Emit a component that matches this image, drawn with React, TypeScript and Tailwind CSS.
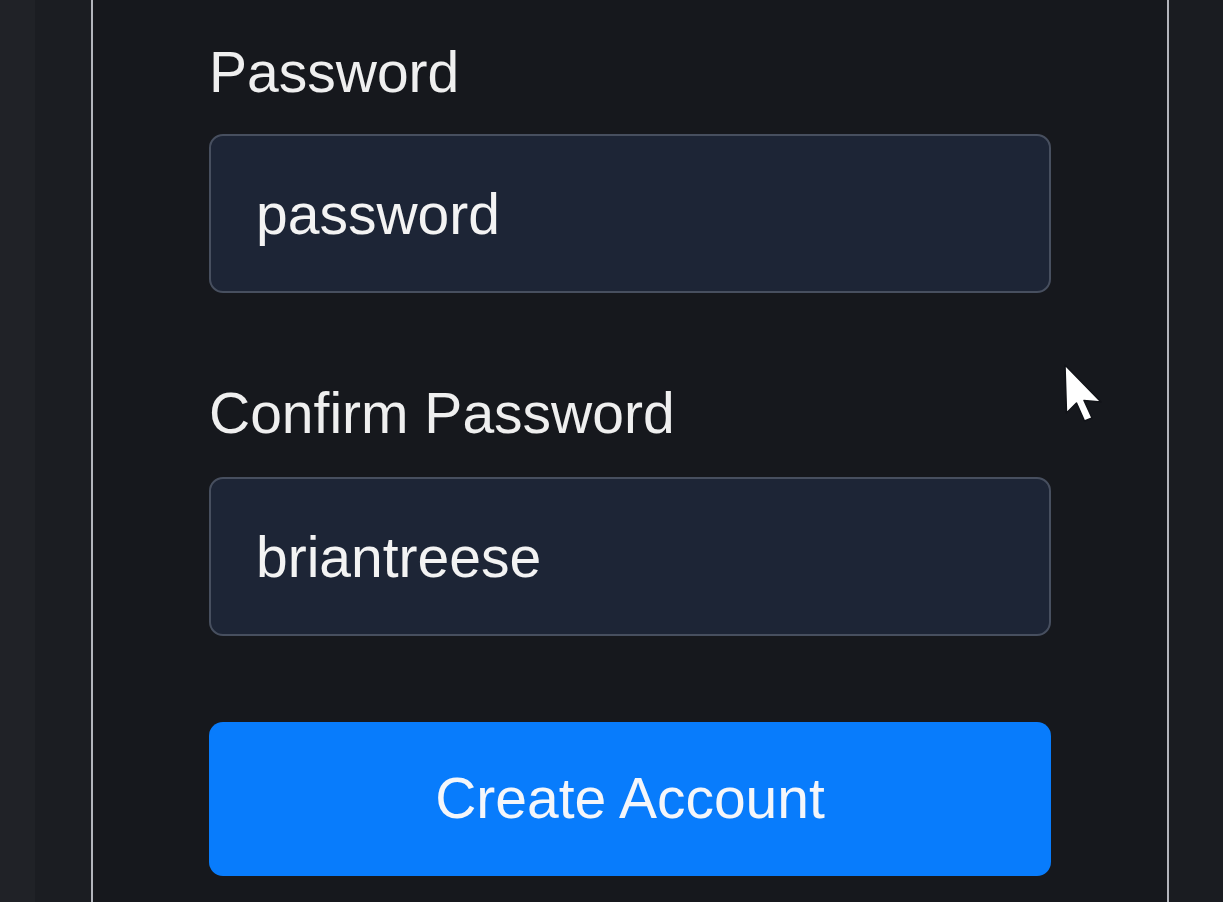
import React from 'react'

const FONT = { fontFamily: '"Liberation Sans", Arial, sans-serif' }

function Field({ label, value, first }: { label: string; value: string; first?: boolean }) {
  return (
    <div className={first ? '' : 'mt-[88px]'}>
      <label className={`block text-[57px] leading-[64px] text-[#efefef] ${first ? 'mb-[30px]' : 'mb-[32px]'}`}>{label}</label>
      <input
        readOnly
        value={value}
        className="block h-[159px] w-full rounded-[14px] border-2 border-[#474f5f] bg-[#1d2536] pl-[45px] text-[57px] text-[#f3f3f3] outline-none"
      />
    </div>
  )
}

function Cursor() {
  return (
    <svg className="absolute left-[1064px] top-[364px]" width="40" height="60" viewBox="0 0 40 60">
      <path
        d="M1 1 L2.5 49 L12.5 39 L20.5 57 L28 54 L20 36.5 L37 38 Z"
        fill="#ffffff"
        stroke="#111318"
        strokeWidth="1.5"
        strokeLinejoin="round"
      />
    </svg>
  )
}

export default function App() {
  return (
    <div className="relative flex h-[902px] w-full overflow-hidden bg-[#1b1d22]" style={FONT}>
      <div className="w-[35px] shrink-0 bg-[#202227]" />
      <div className="w-[56px] shrink-0 bg-[#1b1d22]" />
      <main className="w-[1078px] shrink-0 border-x-2 border-[#b3b5bc] bg-[#16181d] px-[116px] pt-[40px]">
        <Field first label="Password" value="password" />
        <Field label="Confirm Password" value="briantreese" />
        <button className="mt-[86px] block h-[154px] w-full rounded-[14px] bg-[#087cfc] text-[57px] text-[#f4f6fa]">
          Create Account
        </button>
      </main>
      <div className="flex-1 bg-[#1a1c21]" />
      <Cursor />
    </div>
  )
}
